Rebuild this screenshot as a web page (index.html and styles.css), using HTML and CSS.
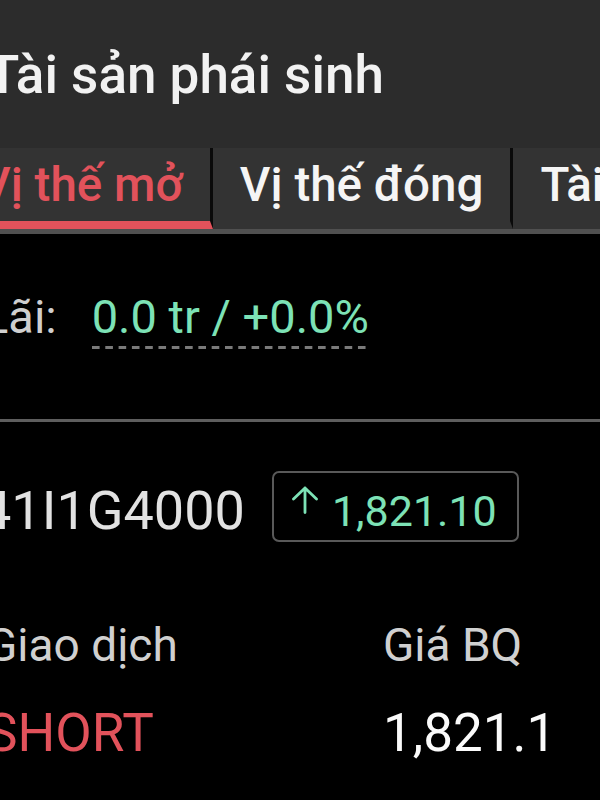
FILE: index.html
```html
<!DOCTYPE html>
<html lang="vi">
<head>
    <meta charset="UTF-8">
    <meta name="viewport" content="width=device-width, initial-scale=1.0">
    <title>Tài sản phái sinh</title>
    <link rel="stylesheet" href="styles.css">
</head>
<body>
    <div class="page">
        <header class="app-bar">
            <h1>Tài sản phái sinh</h1>
        </header>

        <nav class="tabs">
            <div class="tab active">Vị thế mở</div>
            <div class="tab">Vị thế đóng</div>
            <div class="tab">Tài sản</div>
        </nav>

        <section class="summary">
            <span class="label">Lãi:</span>
            <span class="profit">0.0 tr / +0.0%</span>
        </section>

        <section class="position">
            <div class="symbol-row">
                <span class="symbol">41I1G4000</span>
                <span class="price-box">
                    <svg class="arrow" viewBox="0 0 28 28" width="28" height="28">
                        <path d="M14 26.5 V2 M2.5 13 L14 2 L25.5 13" fill="none" stroke="currentColor" stroke-width="2.8" stroke-linecap="round" stroke-linejoin="round"/>
                    </svg>
                    <span class="last">1,821.10</span>
                </span>
            </div>

            <div class="grid">
                <span class="head">Giao dịch</span>
                <span class="head">Giá BQ</span>
                <span class="side short">SHORT</span>
                <span class="value">1,821.1</span>
            </div>
        </section>
    </div>
</body>
</html>
```

FILE: styles.css
```css
body {
    margin: 0;
    background-color: #000;
    font-family: Roboto, "Noto Sans", sans-serif;
    overflow: hidden;
}

.page {
    margin-left: -14px;
}

/* top bar */
.app-bar {
    background-color: #2c2c2c;
    height: 148px;
    display: flex;
    align-items: center;
}

.app-bar h1 {
    margin: 0 0 0 1px;
    padding-top: 2px;
    font-size: 53px;
    font-weight: 500;
    color: #f2f2f2;
}

/* tabs */
.tabs {
    display: flex;
    background-color: #333;
    margin-left: -33px;
    border-bottom: 5px solid #505050;
    white-space: nowrap;
}

.tab {
    height: 73px;
    padding: 0 27px;
    border-bottom: 8px solid transparent;
    border-right: 3px solid #0a0a0a;
    display: flex;
    align-items: center;
    font-size: 47.5px;
    font-weight: 500;
    color: #f5f5f5;
}

.tab.active {
    color: #e2525b;
    border-bottom-color: #e2525b;
}

/* profit summary */
.summary {
    box-sizing: border-box;
    height: 188px;
    padding-top: 55px;
    display: flex;
    align-items: baseline;
    gap: 35px;
    border-bottom: 3px solid #5e5e5e;
}

.summary .label {
    margin-left: -3px;
    font-size: 47px;
    color: #cfcfcf;
}

.profit {
    font-size: 47px;
    color: #7de2b6;
    padding-bottom: 5px;
    background-image: linear-gradient(to right, #7a7a7a 8px, transparent 8px);
    background-size: 13.3px 3px;
    background-repeat: repeat-x;
    background-position: left bottom;
}

/* position card */
.symbol-row {
    display: flex;
    align-items: flex-end;
    gap: 27px;
    margin-top: 49px;
}

.symbol {
    margin-left: -5px;
    font-size: 54px;
    color: #e2e2e2;
}

.price-box {
    display: flex;
    align-items: center;
    gap: 13px;
    height: 67px;
    padding: 0 20px 0 17px;
    border: 2px solid #595959;
    border-radius: 7px;
    font-size: 43px;
    color: #7de2b6;
}

.price-box .arrow {
    margin-bottom: 13px;
}

.price-box .last {
    margin-top: 8px;
}

.grid {
    display: grid;
    grid-template-columns: 397px auto;
    row-gap: 30px;
    margin-top: 76px;
}

.head {
    font-size: 46px;
    color: #d0d0d0;
}

.side,
.value {
    font-size: 53px;
}

.short {
    color: #e2525b;
}

.value {
    color: #fafafa;
}
```
